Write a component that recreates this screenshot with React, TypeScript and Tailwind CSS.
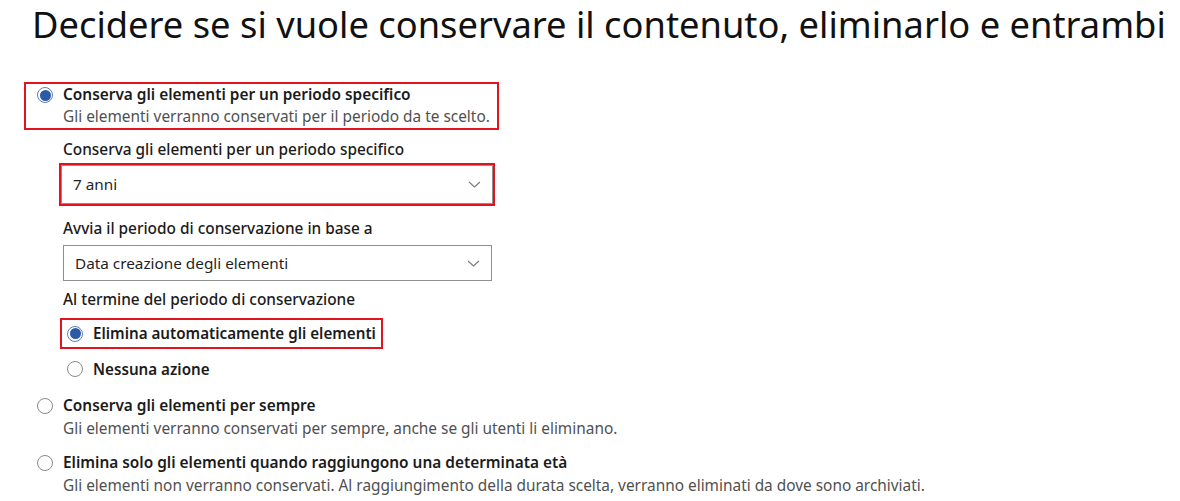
import React from 'react';

const font = { fontFamily: '"Noto Sans", "Open Sans", Arial, sans-serif' };

function Radio({ checked }: { checked?: boolean }) {
  return (
    <span
      className={`flex h-[16px] w-[16px] shrink-0 items-center justify-center rounded-full border ${
        checked ? 'border-[#5b7fbf]' : 'border-[#8a8a8a]'
      } bg-white`}
    >
      {checked && <span className="h-[11px] w-[11px] rounded-full bg-[#2b5aa6]" />}
    </span>
  );
}

function Chevron() {
  return (
    <svg width="13" height="7" viewBox="0 0 13 7" fill="none" className="shrink-0">
      <path d="M1 1l5.5 5 5.5-5" stroke="#7a7a7a" strokeWidth="1.1" />
    </svg>
  );
}

function Select({ value }: { value: string }) {
  return (
    <div className="flex h-full w-full items-center justify-between border border-[#8f8f8f] bg-white pl-[11px] pr-[11px]">
      <span className="text-[15.3px] text-[#1f1f1f]">{value}</span>
      <Chevron />
    </div>
  );
}

export default function App() {
  return (
    <div className="min-h-[501px] w-[1180px] bg-white pl-[24px] text-[#1b1b1b]" style={font}>
      <h1 className="h-[78px] pl-[8px] pt-[1px] text-[36.3px] leading-[46px] font-normal text-[#111]">
        Decidere se si vuole conservare il contenuto, eliminarlo e entrambi
      </h1>

      <div className="mt-[4px] w-[475px] border-2 border-[#e0141c] pl-[11px]">
        <div className="flex h-[22px] items-center gap-[10px]">
          <Radio checked />
          <span className="text-[15.4px] font-semibold">Conserva gli elementi per un periodo specifico</span>
        </div>
        <div className="h-[22px] pl-[26px] text-[15.4px] leading-[22px] text-[#505050]">
          Gli elementi verranno conservati per il periodo da te scelto.
        </div>
      </div>

      <div className="pl-[39px]">
        <div className="mt-[8px] h-[24px] text-[15.4px] leading-[24px] font-medium">
          Conserva gli elementi per un periodo specifico
        </div>
        <div className="ml-[-4px] mt-[1px] h-[43px] w-[436px] border-2 border-[#e0141c]">
          <Select value="7 anni" />
        </div>

        <div className="mt-[11px] h-[24px] text-[15.4px] leading-[24px] font-medium">
          Avvia il periodo di conservazione in base a
        </div>
        <div className="mt-[4px] h-[36px] w-[429px]">
          <Select value="Data creazione degli elementi" />
        </div>

        <div className="mt-[7px] h-[24px] text-[15.4px] leading-[24px] font-medium">
          Al termine del periodo di conservazione
        </div>

        <div className="ml-[-3px] mt-[6px] flex h-[31px] w-[323px] items-center gap-[10px] border-2 border-[#e0141c] pl-[5px]">
          <Radio checked />
          <span className="text-[15.2px] font-semibold">Elimina automaticamente gli elementi</span>
        </div>
        <div className="mt-[8px] flex h-[24px] items-center gap-[10px] pl-[4px]">
          <Radio />
          <span className="text-[15.2px] font-semibold">Nessuna azione</span>
        </div>
      </div>

      <div className="mt-[13px] pl-[13px]">
        <div className="flex h-[23px] items-center gap-[10px]">
          <Radio />
          <span className="text-[15.4px] font-semibold">Conserva gli elementi per sempre</span>
        </div>
        <div className="h-[24px] pl-[26px] text-[15.4px] leading-[24px] text-[#505050]">
          Gli elementi verranno conservati per sempre, anche se gli utenti li eliminano.
        </div>

        <div className="mt-[10px] flex h-[23px] items-center gap-[10px]">
          <Radio />
          <span className="text-[15.4px] font-semibold">Elimina solo gli elementi quando raggiungono una determinata età</span>
        </div>
        <div className="h-[24px] pl-[26px] text-[15.4px] leading-[24px] text-[#505050]">
          Gli elementi non verranno conservati. Al raggiungimento della durata scelta, verranno eliminati da dove sono archiviati.
        </div>
      </div>
    </div>
  );
}
